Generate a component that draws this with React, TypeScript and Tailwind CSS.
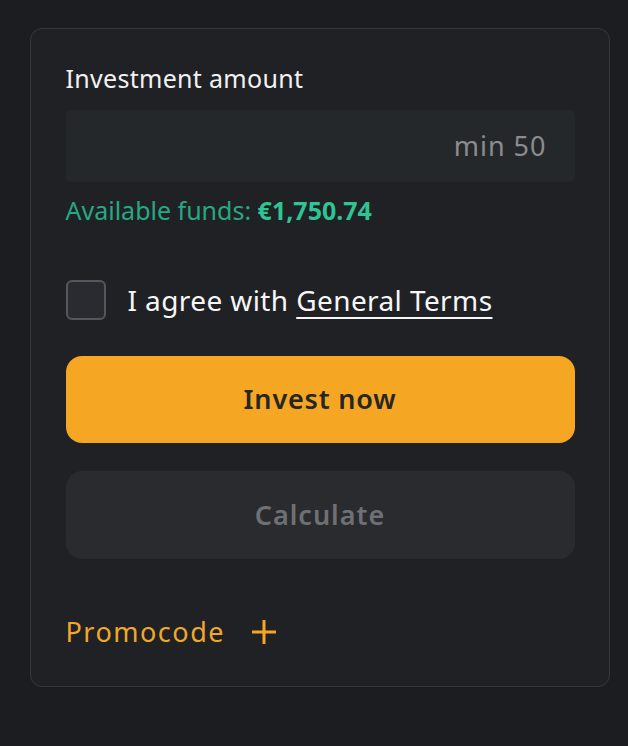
export default function App() {
  return (
    <div className="min-h-[746px] w-full bg-[#1c1d21] pl-[30px] pr-[18px] pt-[28px] pb-[60px] font-['Noto_Sans',sans-serif]">
      <div className="flex flex-col rounded-[12px] border-[1.5px] border-[#37383d] bg-[#202125] px-[34.5px] pt-[33px] pb-[36px]">
        <label className="text-[25px] leading-[32px] tracking-[0.3px] text-[#f2f2f2]">
          Investment amount
        </label>
        <div className="mt-[16px] flex h-[72px] items-center justify-end rounded-[6px] bg-[#25282b] pr-[28px]">
          <span className="text-[27px] tracking-[1px] text-[#8b8c90]">min 50</span>
        </div>
        <p className="mt-[12px] text-[25px] leading-[32px] text-[#27a884]">
          Available funds: <span className="font-bold text-[#2ec493]">€1,750.74</span>
        </p>
        <div className="mt-[54px] flex items-center gap-[22px]">
          <span className="h-[40px] w-[40px] rounded-[6px] border-2 border-[#55565b] bg-[#2a2b31]" />
          <span className="text-[28px] leading-[40px] tracking-[0.4px] text-[#f7f7f7]">
            I agree with{' '}
            <span className="underline decoration-2 underline-offset-[6px]">General Terms</span>
          </span>
        </div>
        <button className="mt-[36px] flex h-[87px] items-center justify-center rounded-[16px] bg-[#f5a623] text-[27px] font-semibold tracking-[0.8px] text-[#262626]">
          Invest now
        </button>
        <button className="mt-[28px] flex h-[88px] items-center justify-center rounded-[16px] bg-[#2a2b2f] text-[27px] font-semibold tracking-[1px] text-[#6f7074]">
          Calculate
        </button>
        <div className="mt-[55px] flex items-center gap-[27px]">
          <span className="text-[27px] leading-[36px] tracking-[1.5px] text-[#f0a82a]">Promocode</span>
          <svg width="24" height="24" viewBox="0 0 24 24" className="text-[#f5a623]">
            <path d="M12 0v24M0 12h24" stroke="currentColor" strokeWidth="3" />
          </svg>
        </div>
      </div>
    </div>
  )
}
